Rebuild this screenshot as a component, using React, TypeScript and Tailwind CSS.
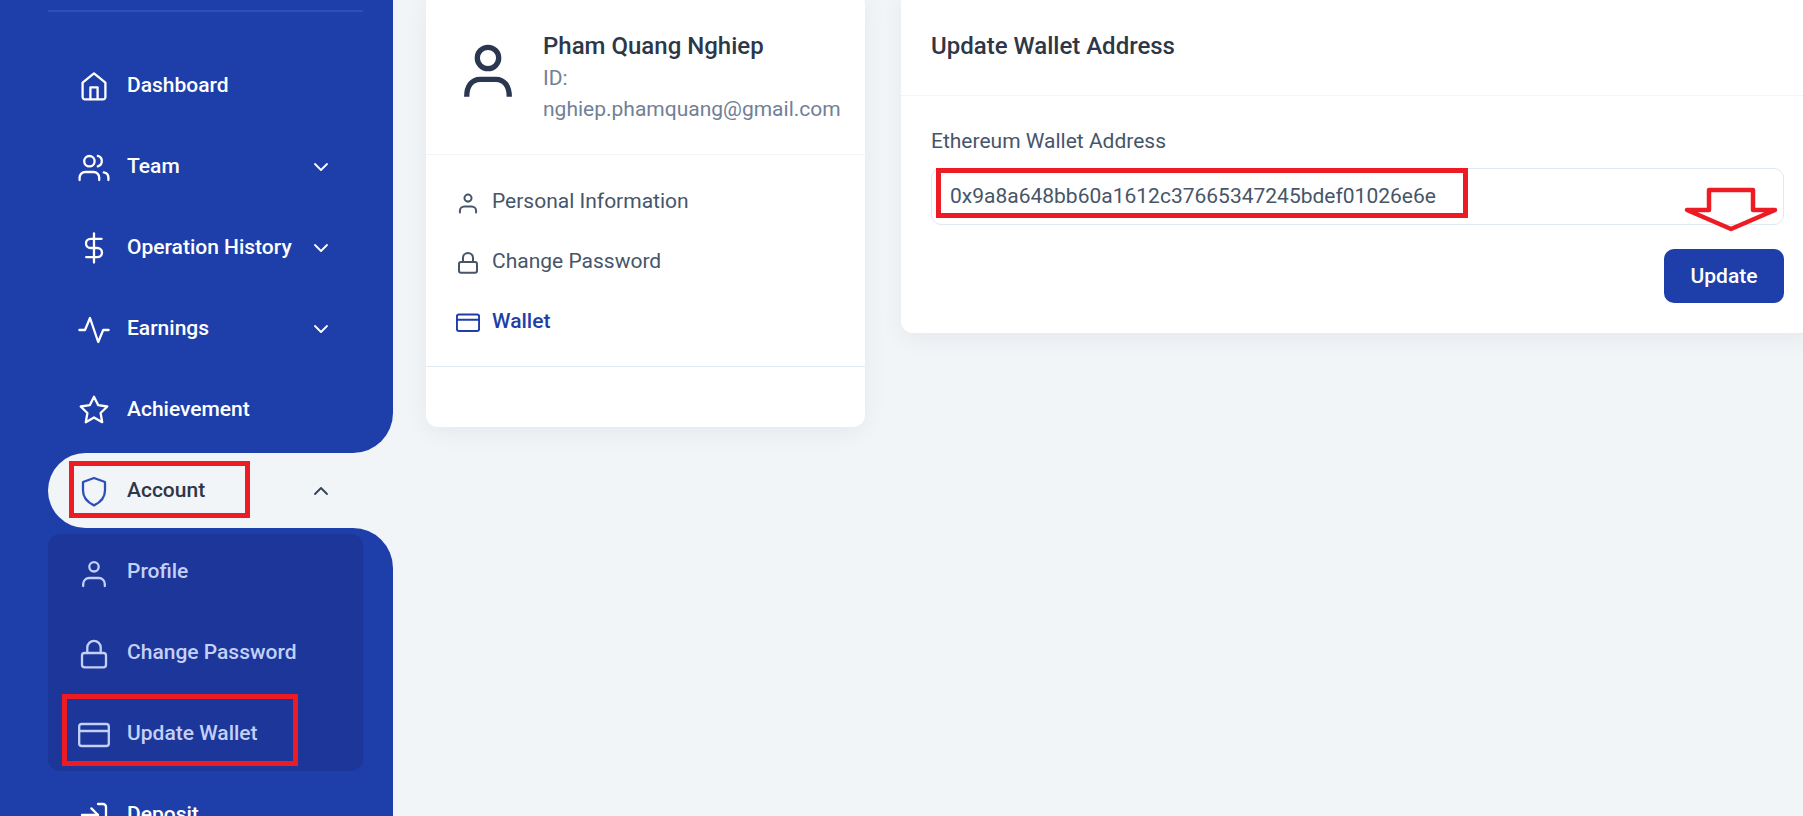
import React from "react";

type IconProps = { size?: number; sw?: number; className?: string };
const Svg = ({ size = 32, sw = 2.3, className = "", children }: IconProps & { children: React.ReactNode }) => (
  <svg width={size} height={size} viewBox="0 0 32 32" fill="none" stroke="currentColor" strokeWidth={sw} strokeLinecap="round" strokeLinejoin="round" className={`shrink-0 ${className}`}>
    {children}
  </svg>
);
const HomeI = (p: IconProps) => (
  <Svg {...p}>
    <path d="M4.6 12.6 16 3.4l11.4 9.2V27a2.4 2.4 0 0 1-2.4 2.4H7A2.4 2.4 0 0 1 4.6 27Z" />
    <path d="M12.4 29V17.4h7.2V29" />
  </Svg>
);
const UsersI = (p: IconProps) => (
  <Svg {...p}>
    <circle cx="11.4" cy="10.2" r="5.2" />
    <path d="M1.6 29v-2.4a5.6 5.6 0 0 1 5.6-5.6h8.4a5.6 5.6 0 0 1 5.6 5.6V29" />
    <path d="M19.8 4.8a5.5 5.5 0 0 1 0 10.6" />
    <path d="M25.8 21.4a5.5 5.5 0 0 1 4.6 5.2V29" />
  </Svg>
);
const DollarI = (p: IconProps) => (
  <Svg {...p}>
    <path d="M16 1.4v29.2" />
    <path d="M23.6 6.8H12.6a4.6 4.6 0 0 0 0 9.2h6.8a4.6 4.6 0 0 1 0 9.2H8.2" />
  </Svg>
);
const ActivityI = (p: IconProps) => (
  <Svg {...p}>
    <path d="M1.4 17H7L12 5l8.2 24 5-12h5.4" />
  </Svg>
);
const StarI = (p: IconProps) => (
  <Svg {...p}>
    <path d="M16 2.8l4.1 8.3 9.2 1.4-6.7 6.5 1.6 9.2L16 23.4l-8.2 4.8 1.6-9.2-6.7-6.5 9.2-1.4Z" />
  </Svg>
);
const ShieldI = (p: IconProps) => (
  <Svg {...p}>
    <path d="M16 3 27 7v8.5C27 23 21 28 16 30.4 11 28 5 23 5 15.5V7Z" />
  </Svg>
);
const UserI = (p: IconProps) => (
  <Svg {...p}>
    <circle cx="16" cy="10.8" r="4.7" />
    <path d="M5.2 30v-2a6 6 0 0 1 6-6h9.6a6 6 0 0 1 6 6v2" />
  </Svg>
);
const LockI = (p: IconProps) => (
  <Svg {...p}>
    <rect x="4" y="16" width="24" height="14.4" rx="2.6" />
    <path d="M9.3 16v-5.4a6.7 6.7 0 0 1 13.4 0V16" />
  </Svg>
);
const CardI = (p: IconProps) => (
  <Svg {...p}>
    <rect x="1.2" y="6" width="29.6" height="22" rx="2.6" />
    <path d="M1.2 13h29.6" />
  </Svg>
);
const LoginI = (p: IconProps) => (
  <Svg {...p}>
    <path d="M20 5h5a3 3 0 0 1 3 3v16a3 3 0 0 1-3 3h-5" />
    <path d="M13.4 9.4 20 16l-6.6 6.6" />
    <path d="M20 16H4" />
  </Svg>
);
const Chevron = ({ up = false }: { up?: boolean }) => (
  <svg width="24" height="24" viewBox="0 0 24 24" fill="none" stroke="currentColor" strokeWidth="1.8" strokeLinecap="round" strokeLinejoin="round" className="ml-auto shrink-0">
    <path d={up ? "M6 15l6-6 6 6" : "M6 9l6 6 6-6"} />
  </svg>
);

const Row = ({ icon, label, chevron, className = "text-white" }: { icon: React.ReactNode; label: string; chevron?: boolean; className?: string }) => (
  <div className={`flex h-[75px] items-center gap-[17px] px-[30px] text-[21px] font-medium ${className}`}>
    {icon}
    <span className="whitespace-nowrap">{label}</span>
    {chevron && <Chevron />}
  </div>
);

const SubRow = ({ icon, label }: { icon: React.ReactNode; label: string }) => (
  <Row icon={icon} label={label} className="text-[#c3d0f7]" />
);

const Side = ({ icon, label, active }: { icon: React.ReactNode; label: string; active?: boolean }) => (
  <div className={`flex h-[60px] items-center gap-[12px] px-[30px] text-[21px] ${active ? "font-medium text-[#1e3fa9]" : "text-[#475569]"}`}>
    {icon}
    <span>{label}</span>
  </div>
);

export default function App() {
  return (
    <div className="relative flex h-[816px] overflow-hidden bg-[#f1f5f8] font-[Roboto,sans-serif]">
      <aside className="flex h-[816px] w-[393px] shrink-0 flex-col">
        <div className="shrink-0 rounded-br-[40px] bg-[#1e3fa9] pt-[10px] pb-[6px]">
          <div className="mr-[30px] ml-12 h-[2px] bg-[#2f4fb8]" />
          <nav className="mt-[36px] flex flex-col gap-[6px] pr-[30px] pl-12">
            <Row icon={<HomeI />} label="Dashboard" />
            <Row icon={<UsersI />} label="Team" chevron />
            <Row icon={<DollarI />} label="Operation History" chevron />
            <Row icon={<ActivityI />} label="Earnings" chevron />
            <Row icon={<StarI />} label="Achievement" />
          </nav>
        </div>
        <div className="shrink-0 bg-[#1e3fa9] pl-12">
          <div className="rounded-l-full bg-[#f1f5f8] pr-[60px]">
            <div className="flex h-[75px] items-center gap-[17px] pl-[30px] text-[21px] font-medium text-[#2d3748]">
              <ShieldI className="text-[#2d4fb9]" />
              <span>Account</span>
              <div className="ml-auto text-[#334155]">
                <Chevron up />
              </div>
            </div>
          </div>
        </div>
        <div className="min-h-0 flex-1 rounded-tr-[40px] bg-[#1e3fa9] pt-[6px] pr-[30px] pl-12">
          <div className="flex flex-col gap-[6px] rounded-xl bg-[#1c369a]">
            <SubRow icon={<UserI />} label="Profile" />
            <SubRow icon={<LockI />} label="Change Password" />
            <SubRow icon={<CardI />} label="Update Wallet" />
          </div>
          <div className="mt-[6px]">
            <Row icon={<LoginI />} label="Deposit" />
          </div>
        </div>
      </aside>

      <main className="flex min-w-0 flex-1 items-start gap-[36px] pl-[33px]">
        <section className="-mt-2 w-[439px] shrink-0 rounded-xl bg-white shadow-[0_6px_24px_rgba(15,23,42,0.05)]">
          <div className="flex items-start gap-[23px] pt-[40px] pr-[15px] pb-[29px] pl-[30px]">
            <svg width="64" height="64" viewBox="0 0 64 64" fill="none" stroke="#2a3750" strokeWidth="5.3" className="mt-[8px] shrink-0">
              <circle cx="32" cy="18" r="10.7" />
              <path d="M10.7 56.7C10.7 46 16 39.3 24 39.3H40C48 39.3 53.3 46 53.3 56.7" />
            </svg>
            <div className="min-w-0">
              <div className="text-[24px] leading-[28px] font-medium text-[#2d3748]">Pham Quang Nghiep</div>
              <div className="mt-[3px] text-[21px] leading-[31px] text-[#718096]">ID: nghiep.phamquang@gmail.com</div>
            </div>
          </div>
          <div className="border-t border-[#f1f5f9] pt-[17px] pb-[14px]">
            <Side icon={<UserI size={24} sw={2.7} />} label="Personal Information" />
            <Side icon={<LockI size={24} sw={2.7} />} label="Change Password" />
            <Side icon={<CardI size={24} sw={2.7} />} label="Wallet" active />
          </div>
          <div className="h-[61px] border-t border-[#e2e8f0]" />
        </section>

        <section className="-mt-2 -mr-2 min-w-0 flex-1 rounded-xl bg-white shadow-[0_6px_24px_rgba(15,23,42,0.05)]">
          <div className="flex h-[104px] items-center border-b border-[#f1f5f9] pt-[4px] pr-[27px] pl-[30px] text-[24px] font-medium text-[#2d3748]">
            Update Wallet Address
          </div>
          <div className="pt-[31px] pr-[27px] pb-[30px] pl-[30px]">
            <div className="text-[21px] leading-[28px] text-[#475569]">Ethereum Wallet Address</div>
            <div className="mt-[13px] flex h-[57px] items-center rounded-[10px] border border-[#e2e8f0] px-[18px] text-[21px] text-[#475569]">
              0x9a8a648bb60a1612c37665347245bdef01026e6e
            </div>
            <div className="mt-[24px] flex justify-end">
              <button className="h-[54px] w-[120px] rounded-[10px] bg-[#1e3fa9] pt-[1px] text-[21px] font-medium text-white">Update</button>
            </div>
          </div>
        </section>
      </main>

      <div className="absolute top-[461px] left-[69px] h-[57px] w-[181px] border-[5px] border-[#ed1c24]" />
      <div className="absolute top-[694px] left-[62px] h-[72px] w-[236px] border-[5px] border-[#ed1c24]" />
      <div className="absolute top-[168px] left-[936px] h-[50px] w-[532px] border-[5px] border-[#ed1c24]" />
      <svg className="absolute top-[184px] left-[1680px]" width="102" height="52" viewBox="0 0 102 52" fill="none" stroke="#ed1c24" strokeWidth="4.5" strokeLinejoin="round">
        <path d="M29 6H73V26H95L51 45 7 26H29Z" />
      </svg>
    </div>
  );
}
